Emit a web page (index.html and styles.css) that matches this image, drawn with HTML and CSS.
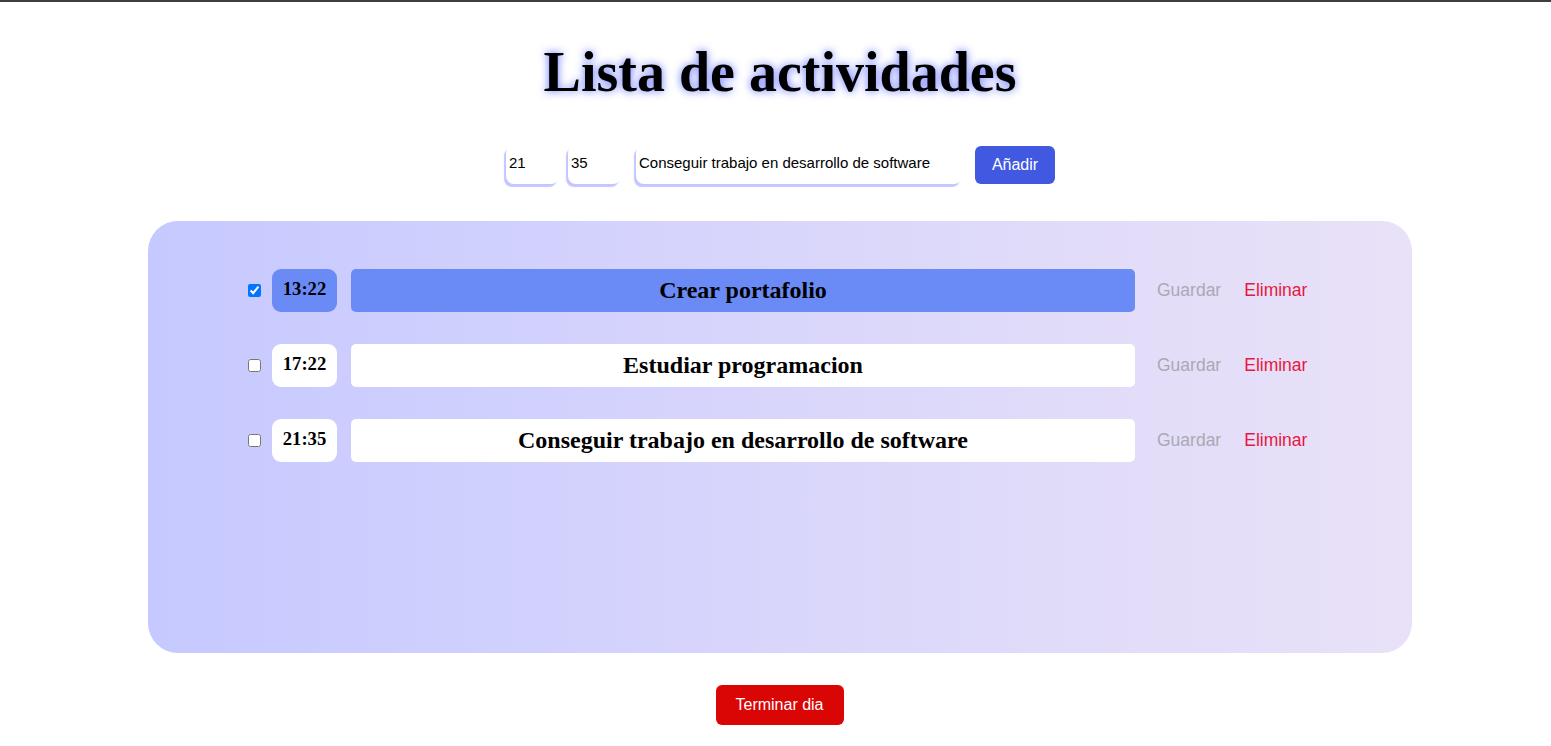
FILE: index.html
```html
<!DOCTYPE html>
<html lang="es">
<head>
<meta charset="utf-8">
<title>Lista de actividades</title>
<link rel="stylesheet" href="styles.css">
</head>
<body>
<h1 class="title">Lista de actividades</h1>
<form class="add-form">
  <input class="num-input" type="text" value="21">
  <input class="num-input" type="text" value="35">
  <input class="text-input" type="text" value="Conseguir trabajo en desarrollo de software">
  <button class="add-btn" type="button">Añadir</button>
</form>
<section class="board">
  <div class="row">
    <input class="check" type="checkbox" checked>
    <div class="time done">13:22</div>
    <div class="task done">Crear portafolio</div>
    <button class="link save" type="button">Guardar</button>
    <button class="link del" type="button">Eliminar</button>
  </div>
  <div class="row">
    <input class="check" type="checkbox">
    <div class="time">17:22</div>
    <div class="task">Estudiar programacion</div>
    <button class="link save" type="button">Guardar</button>
    <button class="link del" type="button">Eliminar</button>
  </div>
  <div class="row">
    <input class="check" type="checkbox">
    <div class="time">21:35</div>
    <div class="task">Conseguir trabajo en desarrollo de software</div>
    <button class="link save" type="button">Guardar</button>
    <button class="link del" type="button">Eliminar</button>
  </div>
</section>
<div class="footer">
  <button class="end-btn" type="button">Terminar dia</button>
</div>
</body>
</html>
```

FILE: styles.css
```css
html, body {
  margin: 0;
  padding: 0;
  background: #ffffff;
}
body {
  border-top: 2px solid #3e3e42;
  font-family: "Liberation Serif", "Times New Roman", serif;
}
.title {
  margin: 38px 0 0;
  padding-left: 9px;
  text-align: center;
  font-size: 56px;
  line-height: 64px;
  font-weight: bold;
  color: #000;
  text-shadow: 0 0 9px #6372ff;
}
.add-form {
  margin-top: 40px;
  display: flex;
  justify-content: center;
  align-items: center;
  padding-left: 10px;
}
.num-input, .text-input {
  box-sizing: border-box;
  height: 39px;
  border: none;
  outline: none;
  border-radius: 8px;
  background: #fff;
  box-shadow: -2px 3px 1px #c3c6ff;
  font-family: "Liberation Sans", Arial, sans-serif;
  font-size: 15px;
  color: #000;
  padding: 0 3px 4px;
}
.num-input {
  width: 53px;
  margin-right: 9px;
}
.num-input + .num-input {
  margin-right: 15px;
}
.text-input {
  width: 326px;
  margin-right: 13px;
}
.add-btn {
  box-sizing: border-box;
  width: 80px;
  height: 38px;
  border: none;
  border-radius: 6px;
  background: #4159e1;
  color: #fff;
  font-family: "Liberation Sans", Arial, sans-serif;
  font-size: 16px;
  margin-top: 2px;
}
.board {
  box-sizing: border-box;
  width: 1264px;
  height: 432px;
  margin: 37px 0 0 148px;
  border-radius: 30px;
  background: linear-gradient(90deg, #c6c9ff 0%, #d3d2fd 35%, #e0dbf9 70%, #e9e1f8 100%);
  padding: 48px 0 0 100px;
  display: flex;
  flex-direction: column;
  gap: 32px;
}
.row {
  display: flex;
  align-items: center;
  height: 43px;
}
.check {
  width: 13px;
  height: 13px;
  margin: 0 11px 0 0;
  accent-color: #0075ff;
}
.time {
  box-sizing: border-box;
  width: 65px;
  height: 43px;
  border-radius: 9px;
  background: #fff;
  font-weight: bold;
  font-size: 18.7px;
  text-align: center;
  padding-top: 9px;
  margin-right: 14px;
}
.task {
  box-sizing: border-box;
  width: 784px;
  height: 43px;
  border-radius: 5px;
  background: #fff;
  font-weight: bold;
  font-size: 24px;
  text-align: center;
  line-height: 43px;
  margin-right: 22px;
}
.time.done, .task.done {
  background: #6a8af5;
}
.link {
  border: none;
  background: none;
  padding: 0;
  font-family: "Liberation Sans", Arial, sans-serif;
  font-size: 17.5px;
  cursor: pointer;
}
.save {
  color: #aaa9b3;
  margin-right: 23px;
}
.del {
  color: #e8173c;
}
.footer {
  display: flex;
  justify-content: center;
  margin-top: 32px;
  padding-left: 8px;
}
.end-btn {
  box-sizing: border-box;
  width: 128px;
  height: 40px;
  border: none;
  border-radius: 6px;
  background: #da0606;
  color: #fff;
  font-family: "Liberation Sans", Arial, sans-serif;
  font-size: 16px;
}
```
